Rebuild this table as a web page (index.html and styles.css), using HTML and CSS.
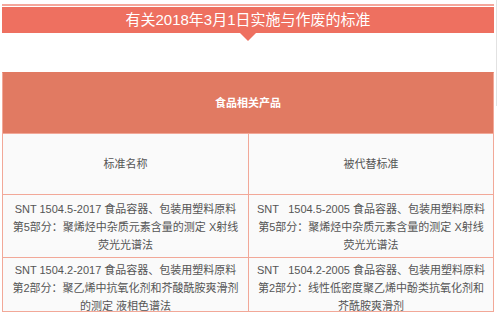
FILE: index.html
```html
<!DOCTYPE html>
<html lang="zh-CN">
<head>
<meta charset="utf-8">
<link rel="stylesheet" href="styles.css">
</head>
<body>
<div class="edge"></div>
<div class="page">
  <div class="banner-line"></div>
  <div class="banner">有关2018年3月1日实施与作废的标准</div>
  <div class="arrow"></div>
  <div class="grid">
    <div class="cell head">食品相关产品</div>
    <div class="cell label">标准名称</div>
    <div class="cell label">被代替标准</div>
    <div class="cell mid">SNT 1504.5-2017 食品容器、包装用塑料原料<br>第5部分：聚烯烃中杂质元素含量的测定 X射线<br>荧光光谱法</div>
    <div class="cell mid">SNT&nbsp;&nbsp; 1504.5-2005 食品容器、包装用塑料原料<br>第5部分：聚烯烃中杂质元素含量的测定 X射线<br>荧光光谱法</div>
    <div class="cell last">SNT 1504.2-2017 食品容器、包装用塑料原料<br>第2部分：聚乙烯中抗氧化剂和芥酸酰胺爽滑剂<br>的测定 液相色谱法</div>
    <div class="cell last">SNT&nbsp;&nbsp; 1504.2-2005 食品容器、包装用塑料原料<br>第2部分：线性低密度聚乙烯中酚类抗氧化剂和<br>芥酰胺爽滑剂</div>
  </div>
</div>
</body>
</html>
```
FILE: styles.css
```css
html, body {
  margin: 0;
  padding: 0;
  background: #ffffff;
}
body {
  font-family: "Liberation Sans", "Noto Sans CJK SC", sans-serif;
  width: 500px;
  height: 324px;
  overflow: hidden;
  position: relative;
}
.edge {
  position: absolute;
  left: 496px;
  top: 0;
  width: 1px;
  height: 106px;
  background: #e2e2e2;
}
.page {
  padding: 4px 0 0 2px;
  width: 492px;
}
.banner-line {
  height: 2px;
  background: #f4a69b;
  margin-bottom: 1px;
}
.banner {
  height: 26px;
  line-height: 26px;
  background: #ee7060;
  color: #ffffff;
  font-size: 15px;
  text-align: center;
}
.arrow {
  width: 0;
  height: 0;
  margin: 0 auto;
  border-left: 8px solid transparent;
  border-right: 8px solid transparent;
  border-top: 8px solid #ee7060;
}
.grid {
  margin-top: 31px;
  display: grid;
  grid-template-columns: 245px 244px;
  grid-template-rows: 60px 60px 62px 53px;
  gap: 1px;
  background: #f2a898;
  border: 1px solid #f2a898;
  border-top-color: #e17a62;
}
.cell {
  background: #fafafa;
  color: #555555;
  font-size: 11px;
  line-height: 18px;
  text-align: center;
  overflow: hidden;
}
.head {
  grid-column: 1 / 3;
  background: #e17a62;
  color: #ffffff;
  font-weight: bold;
  display: flex;
  align-items: center;
  justify-content: center;
}
.label {
  display: flex;
  align-items: center;
  justify-content: center;
}
.mid {
  display: flex;
  align-items: center;
  justify-content: center;
  padding-top: 2px;
}
.last {
  padding-top: 3px;
}
```
